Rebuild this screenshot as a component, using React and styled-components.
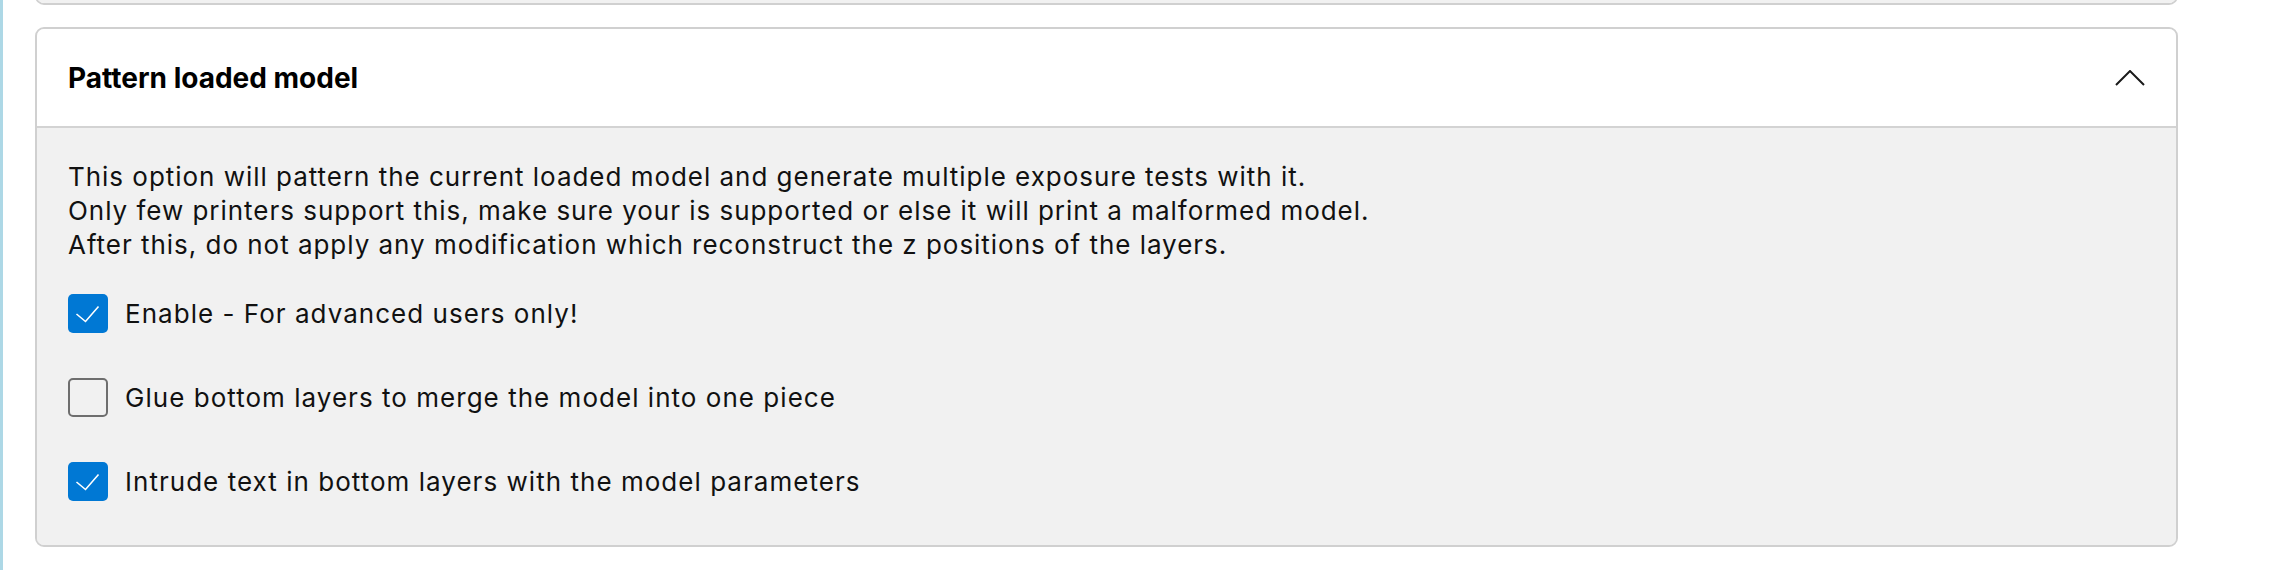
import React, { useState } from "react";
import styled, { createGlobalStyle } from "styled-components";

const GlobalStyle = createGlobalStyle`
  html, body { margin: 0; padding: 0; background: #ffffff; }
  body { font-family: Inter, "Noto Sans", sans-serif; color: #111111; }
  * { box-sizing: border-box; }
`;

const Page = styled.div`
  height: 570px;
  display: flex;
  flex-direction: column;
  justify-content: flex-end;
  gap: 22px;
  overflow: hidden;
  border-left: 3px solid #add8e6;
  padding: 0 114px 23px 32px;
  background: #ffffff;
`;

const Panel = styled.section`
  flex-shrink: 0;
  border: 2px solid #d0d0d0;
  border-radius: 9px;
  overflow: hidden;
  background: #f1f1f1;
`;

const Header = styled.div`
  height: 99px;
  display: flex;
  align-items: center;
  justify-content: space-between;
  padding: 0 31px 0 31px;
  background: #ffffff;
  border-bottom: 2px solid #d3d3d3;
  cursor: pointer;
`;

const Title = styled.h2`
  margin: 0;
  font-size: 28px;
  font-weight: 700;
  color: #000000;
  letter-spacing: 0;
`;

const Body = styled.div`
  padding: 32px 31px 44px 31px;
  background: #f1f1f1;
  height: ${(p) => (p.$h ? `${p.$h}px` : "auto")};
`;

const Description = styled.p`
  margin: 0;
  font-size: 26px;
  line-height: 34px;
  letter-spacing: 0.97px;
  color: #111111;
`;

const Options = styled.div`
  margin-top: 32px;
  display: flex;
  flex-direction: column;
  gap: 45px;
`;

const OptionRow = styled.label`
  display: flex;
  align-items: center;
  gap: 17px;
  height: 39px;
  cursor: pointer;
`;

const Box = styled.span`
  width: 40px;
  height: 39px;
  flex-shrink: 0;
  border-radius: 5px;
  display: flex;
  align-items: center;
  justify-content: center;
  background: ${(p) => (p.$checked ? "#0078d4" : "transparent")};
  border: ${(p) => (p.$checked ? "none" : "2px solid #6e6e6e")};
`;

const OptionLabel = styled.span`
  font-size: 26px;
  letter-spacing: 1.03px;
  color: #111111;
`;

const Chevron = () => (
  <svg width="30" height="16" viewBox="0 0 30 16" fill="none">
    <path d="M1 15 L15 1 L29 15" stroke="#1a1a1a" strokeWidth="2" />
  </svg>
);

const Check = () => (
  <svg width="40" height="39" viewBox="0 0 40 39" fill="none">
    <path d="M8.5 20 L17.5 27.5 L30.5 12.5" stroke="#ffffff" strokeWidth="1.6" />
  </svg>
);

const Checkbox = ({ checked, onChange, children }) => (
  <OptionRow onClick={onChange}>
    <Box $checked={checked}>{checked && <Check />}</Box>
    <OptionLabel>{children}</OptionLabel>
  </OptionRow>
);

export default function App() {
  const [opts, setOpts] = useState([true, false, true]);
  const toggle = (i) => () =>
    setOpts((o) => o.map((v, j) => (j === i ? !v : v)));

  return (
    <>
      <GlobalStyle />
      <Page>
        <Panel>
          <Body $h={240} />
        </Panel>
        <Panel>
          <Header>
            <Title>Pattern loaded model</Title>
            <Chevron />
          </Header>
          <Body>
            <Description>
              This option will pattern the current loaded model and generate multiple exposure tests with it.
              <br />
              Only few printers support this, make sure your is supported or else it will print a malformed model.
              <br />
              After this, do not apply any modification which reconstruct the z positions of the layers.
            </Description>
            <Options>
              <Checkbox checked={opts[0]} onChange={toggle(0)}>
                Enable - For advanced users only!
              </Checkbox>
              <Checkbox checked={opts[1]} onChange={toggle(1)}>
                Glue bottom layers to merge the model into one piece
              </Checkbox>
              <Checkbox checked={opts[2]} onChange={toggle(2)}>
                Intrude text in bottom layers with the model parameters
              </Checkbox>
            </Options>
          </Body>
        </Panel>
      </Page>
    </>
  );
}
